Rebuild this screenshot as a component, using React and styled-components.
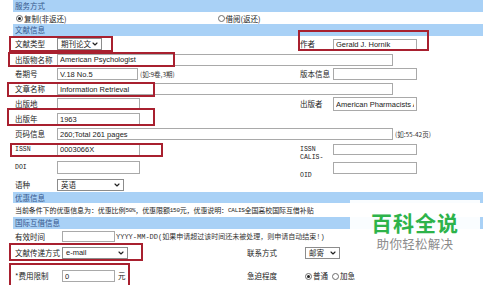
import React from 'react';
import styled, { createGlobalStyle } from 'styled-components';
import { ChevronDown } from 'lucide-react';

const GlobalStyle = createGlobalStyle`
  html, body {
    margin: 0;
    padding: 0;
    background: #fff;
  }
  body {
    font-family: "Noto Sans CJK SC", "Liberation Sans", sans-serif;
    color: #222;
  }
`;

const Page = styled.div`
  position: relative;
  width: 500px;
  height: 285px;
  overflow: hidden;
  padding-left: 13px;
  box-sizing: border-box;
`;

const Form = styled.div`
  width: 470px;
  display: flex;
  flex-direction: column;
`;

const Bar = styled.div`
  height: ${p => p.$h}px;
  line-height: ${p => p.$h}px;
  background: #a9d1f6;
  color: #36578c;
  font-size: 7.5px;
  padding-left: 2px;
  white-space: nowrap;
`;

const Row = styled.div`
  display: grid;
  grid-template-columns: ${p => p.$cols || '44px 241px 35px 1fr'};
  grid-template-rows: minmax(0, 1fr);
  align-items: center;
  height: ${p => p.$h}px;
  box-sizing: border-box;
  padding-top: ${p => p.$pt || 0}px;
  font-size: 7.5px;
  line-height: 10px;
`;

const Label = styled.span`
  padding-left: 2px;
  white-space: nowrap;
  font-family: ${p => (p.$mono ? '"Liberation Mono", "Noto Sans CJK SC", monospace' : 'inherit')};
  font-size: ${p => (p.$mono ? '6.5px' : 'inherit')};
  line-height: ${p => p.$lh || 10}px;
  margin-bottom: ${p => p.$up || 0}px;
`;

const Cell = styled.div`
  display: flex;
  align-items: center;
  gap: ${p => p.$gap || 2}px;
  grid-column: span ${p => p.$span || 1};
  white-space: nowrap;
`;

const Field = styled.input`
  box-sizing: border-box;
  width: ${p => p.$w}px;
  height: ${p => p.$h || 12}px;
  margin: 0;
  padding: 0 2px;
  border: 1px solid #a9a9a9;
  background: #fff;
  font: 7.5px "Liberation Sans", Arial, sans-serif;
  color: #222;
  outline: none;
`;

const Select = styled.div`
  box-sizing: border-box;
  width: ${p => p.$w}px;
  height: 12px;
  border: 1px solid #8c8c8c;
  padding: 0 2px 0 3px;
  display: flex;
  align-items: center;
  justify-content: space-between;
  font-size: 7.5px;
  font-family: ${p => (p.$latin ? '"Liberation Sans", sans-serif' : 'inherit')};
  background: #fff;
`;

const Note = styled.span`
  color: #333;
  font-size: ${p => p.$fs || 6.5}px;
  font-family: ${p => (p.$mono ? '"Liberation Mono", "Noto Sans CJK SC", monospace' : 'inherit')};
`;

const Radio = styled.span`
  position: relative;
  display: inline-block;
  width: 5px;
  height: 5px;
  border: 1px solid #6d6d6d;
  border-radius: 50%;
  background: #fff;
  margin-right: 1px;
  &::after {
    content: '';
    display: ${p => (p.$on ? 'block' : 'none')};
    position: absolute;
    inset: 1px;
    border-radius: 50%;
    background: #222;
  }
`;

const Choice = styled.span`
  display: inline-flex;
  align-items: center;
  margin-left: ${p => p.$ml || 0}px;
  font-size: 7.5px;
`;

const RadioRow = styled.div`
  height: 12px;
  display: flex;
  align-items: center;
  padding-left: 3px;
`;

const Info = styled.div`
  height: 14px;
  display: flex;
  align-items: center;
  padding-left: 2px;
  font-size: 7px;
  white-space: nowrap;
  letter-spacing: -0.1px;
`;

const Latin = styled.span`
  font-family: "Liberation Mono", monospace;
  font-size: 6px;
  letter-spacing: -0.3px;
`;

const Mark = styled.div`
  position: absolute;
  left: ${p => p.$x}px;
  top: ${p => p.$y}px;
  width: ${p => p.$w}px;
  height: ${p => p.$h}px;
  border: 2.5px solid #a8202f;
  box-sizing: border-box;
  pointer-events: none;
`;

const Watermark = styled.div`
  position: absolute;
  left: 350px;
  top: 200px;
  width: 130px;
  height: 52px;
  background: rgba(255, 255, 255, 0.94);
  display: flex;
  flex-direction: column;
  align-items: center;
  padding-top: 9px;
  box-sizing: border-box;
`;

const WmTitle = styled.div`
  color: #2db34a;
  font-size: 21px;
  font-weight: 700;
  line-height: 27px;
  letter-spacing: 1px;
`;

const WmSub = styled.div`
  color: #8b8b8b;
  font-size: 12.5px;
  line-height: 16px;
  letter-spacing: 0.3px;
`;

const Chevron = () => <ChevronDown size={8} strokeWidth={3.5} color="#222" />;

const marks = [
  { x: 9, y: 36, w: 104, h: 16 },
  { x: 298, y: 30, w: 131, h: 21 },
  { x: 8, y: 52, w: 167, h: 15 },
  { x: 7, y: 82, w: 148, h: 15 },
  { x: 7, y: 108, w: 148, h: 18 },
  { x: 10, y: 143, w: 153, h: 14 },
  { x: 9, y: 243, w: 134, h: 18 },
  { x: 9, y: 263, w: 121, h: 24 },
];

const lower = '49px 183px 60px 1fr';

export default function App() {
  return (
    <Page>
      <GlobalStyle />
      <Form>
        <Bar $h={12}>服务方式</Bar>
        <RadioRow>
          <Choice><Radio $on />复制(非返还)</Choice>
          <Choice $ml={151}><Radio />借阅(返还)</Choice>
        </RadioRow>
        <Bar $h={12}>文献信息</Bar>

        <Row $h={16}>
          <Label>文献类型</Label>
          <Cell>
            <Select $w={45}>期刊论文<Chevron /></Select>
          </Cell>
          <Label>作者</Label>
          <Field $w={84} $h={11} readOnly defaultValue="Gerald J. Hornik" />
        </Row>
        <Row $h={15}>
          <Label>出版物名称</Label>
          <Cell $span={3}>
            <Field $w={336} readOnly defaultValue="American Psychologist" />
          </Cell>
        </Row>
        <Row $h={14}>
          <Label>卷期号</Label>
          <Cell>
            <Field $w={81} readOnly defaultValue="V.18 No.5" />
            <Note>(如:9卷,3期)</Note>
          </Cell>
          <Label>版本信息</Label>
          <Field $w={84} readOnly defaultValue="" />
        </Row>
        <Row $h={16}>
          <Label>文章名称</Label>
          <Cell $span={3}>
            <Field $w={336} readOnly defaultValue="Information Retrieval" />
          </Cell>
        </Row>
        <Row $h={14}>
          <Label>出版地</Label>
          <Cell>
            <Field $w={83} readOnly defaultValue="" />
          </Cell>
          <Label>出版者</Label>
          <Field $w={84} $h={14} readOnly defaultValue="American Pharmacists Association" />
        </Row>
        <Row $h={16}>
          <Label>出版年</Label>
          <Cell>
            <Field $w={83} readOnly defaultValue="1963" />
          </Cell>
        </Row>
        <Row $h={14}>
          <Label>页码信息</Label>
          <Cell $span={3}>
            <Field $w={336} readOnly defaultValue="260;Total 261 pages" />
            <Note>(如:55-42页)</Note>
          </Cell>
        </Row>
        <Row $h={17}>
          <Label $mono>ISSN</Label>
          <Cell>
            <Field $w={83} readOnly defaultValue="0003066X" />
          </Cell>
          <Label $mono>ISSN</Label>
          <Field $w={84} $h={11} readOnly defaultValue="" />
        </Row>
        <Row $h={19}>
          <Label $mono>DOI</Label>
          <Cell>
            <Field $w={83} $h={13} readOnly defaultValue="" />
          </Cell>
          <Label $mono $lh={18} $up={2}>CALIS-<br />OID</Label>
          <Field $w={84} $h={12} readOnly defaultValue="" />
        </Row>
        <Row $h={15}>
          <Label>语种</Label>
          <Cell>
            <Select $w={67}>英语<Chevron /></Select>
          </Cell>
        </Row>

        <Bar $h={11}>优惠信息</Bar>
        <Info>
          当前条件下的优惠信息为：优惠比例<Latin>50%</Latin>，优惠限额<Latin>150</Latin>元，优惠说明：<Latin>CALIS</Latin>全国高校国际互借补贴
        </Info>
        <Bar $h={12}>国际互借信息</Bar>

        <Row $h={15} $cols={lower}>
          <Label>有效时间</Label>
          <Cell $span={3} $gap={1}>
            <Field $w={53} $h={11} readOnly defaultValue="" />
            <Note $mono $fs={7}>YYYY-MM-DD(如果申请超过该时间还未被处理，则申请自动结束!)</Note>
          </Cell>
        </Row>
        <Row $h={18} $cols={lower}>
          <Label>文献传递方式</Label>
          <Cell>
            <Select $w={66} $latin>e-mail<Chevron /></Select>
          </Cell>
          <Label>联系方式</Label>
          <Cell>
            <Select $w={35}>邮寄<Chevron /></Select>
          </Cell>
        </Row>
        <Row $h={23} $pt={5} $cols={lower}>
          <Label>*费用限制</Label>
          <Cell $gap={3}>
            <Field $w={53} readOnly defaultValue="0" />
            <span>元</span>
          </Cell>
          <Label>急迫程度</Label>
          <Cell $gap={4}>
            <Choice><Radio $on />普通</Choice>
            <Choice><Radio />加急</Choice>
          </Cell>
        </Row>
      </Form>

      {marks.map((m, i) => (
        <Mark key={i} $x={m.x} $y={m.y} $w={m.w} $h={m.h} />
      ))}

      <Watermark>
        <WmTitle>百科全说</WmTitle>
        <WmSub>助你轻松解决</WmSub>
      </Watermark>
    </Page>
  );
}
